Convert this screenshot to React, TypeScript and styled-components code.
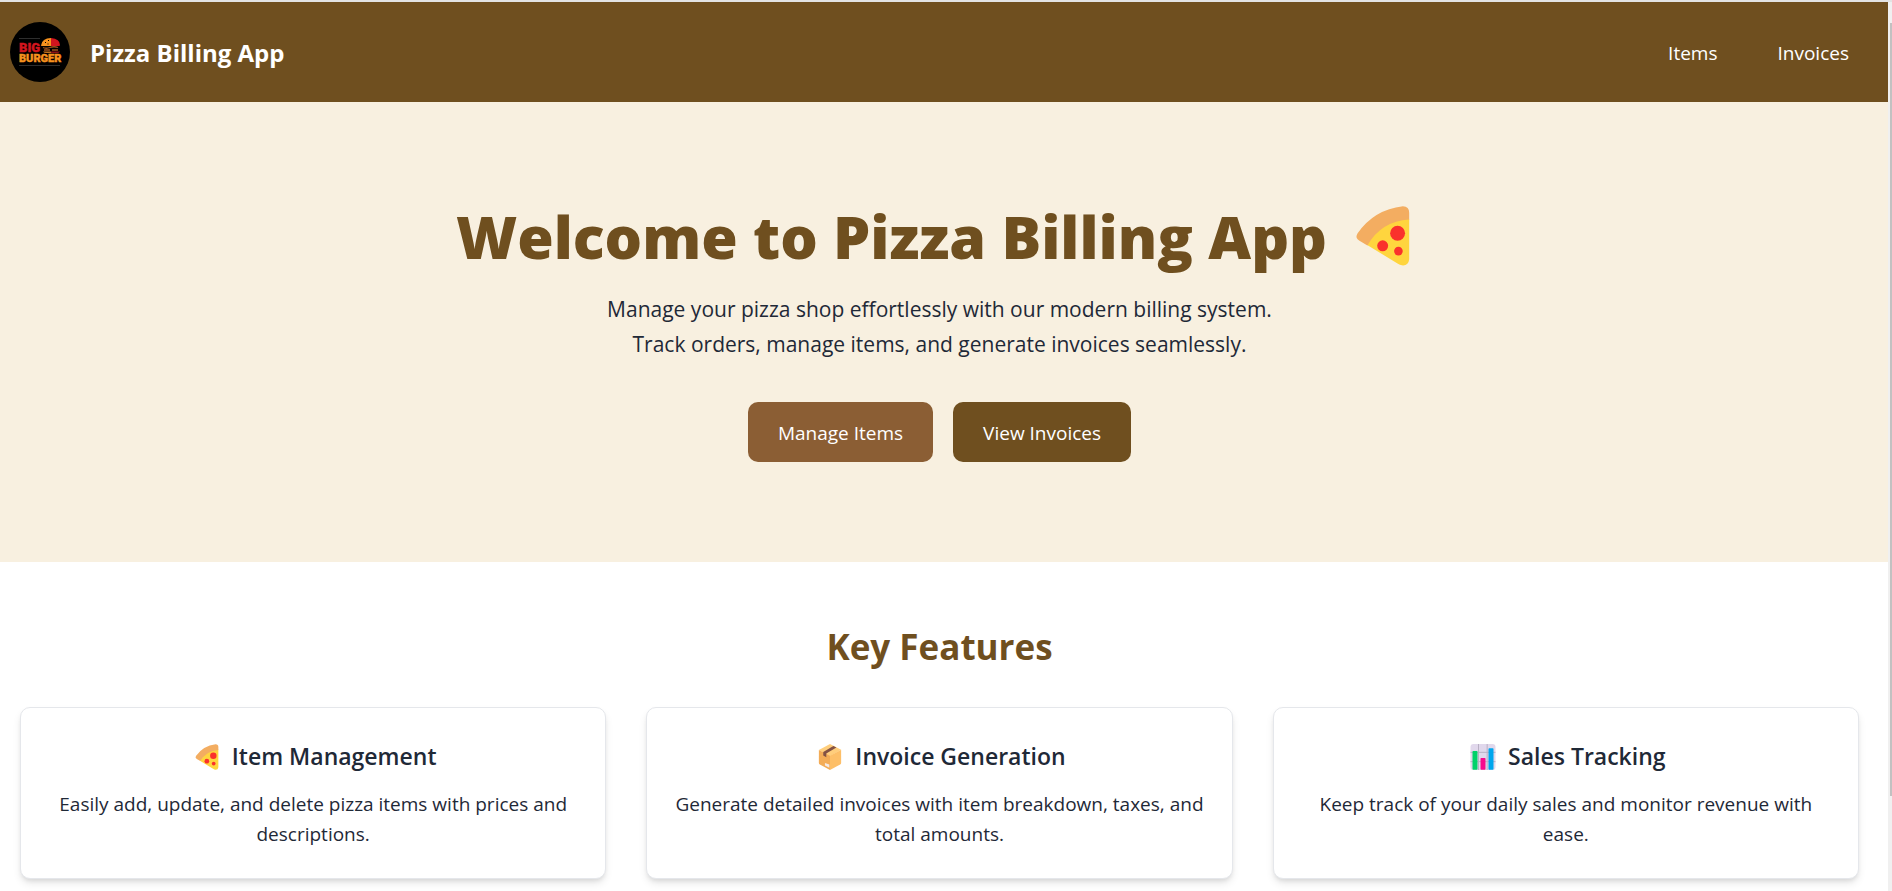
import React from "react";
import styled, { createGlobalStyle } from "styled-components";

const brown = "#6f4f1f";
const ink = "#1f2937";

const GlobalStyle = createGlobalStyle`
  *, *::before, *::after { box-sizing: border-box; }
  body {
    margin: 0;
    background: #fff;
    color: ${ink};
    font-family: "Segoe UI", "Open Sans", "Noto Sans", sans-serif;
    font-size: 19px;
    line-height: 30px;
  }
  h1, h2, h3, p { margin: 0; }
  a { color: inherit; text-decoration: none; }
`;

const Window = styled.div`
  display: flex;
  height: 100vh;
  overflow: hidden;
  border-top: 2px solid #e3e3e3;
`;

const Page = styled.div`
  flex: 1;
  min-width: 0;
`;

const ScrollTrack = styled.div`
  flex: none;
  width: 4px;
  padding: 21px 0 0 2px;
  background: #f0f0f0;
`;

const ScrollThumb = styled.div`
  height: 89%;
  background: #c1c1c1;
`;

const Header = styled.header`
  display: flex;
  align-items: center;
  justify-content: space-between;
  height: 100px;
  padding: 0 39px 0 10px;
  background: ${brown};
  color: #fff;
`;

const Brand = styled.a`
  display: flex;
  align-items: center;
  gap: 20px;
  font-size: 24px;
  font-weight: 700;
`;

const BrandName = styled.span`
  padding-top: 2px;
`;

const Nav = styled.nav`
  display: flex;
  gap: 60px;
  padding-top: 2px;
`;

const Hero = styled.section`
  display: flex;
  flex-direction: column;
  align-items: center;
  padding: 104px 9px 100px 0;
  background: #f8f0e0;
  text-align: center;
`;

const HeroTitle = styled.h1`
  display: flex;
  align-items: center;
  gap: 16px;
  height: 60px;
  margin-bottom: 26px;
  color: ${brown};
  font-size: 59px;
  font-weight: 800;
  line-height: 60px;
`;

const HeroText = styled.p`
  max-width: 700px;
  margin-bottom: 40px;
  font-size: 21px;
  line-height: 35px;
`;

const Actions = styled.div`
  display: flex;
  gap: 20px;
`;

const Button = styled.button<{ $tone: string }>`
  height: 60px;
  padding: 2px 30px 0;
  border: 0;
  border-radius: 10px;
  background: ${(p) => p.$tone};
  color: #fff;
  font: inherit;
  cursor: pointer;
`;

const Features = styled.section`
  padding: 62px 29px 60px 20px;
  text-align: center;
`;

const SectionTitle = styled.h2`
  margin-bottom: 38px;
  color: ${brown};
  font-size: 35px;
  font-weight: 700;
  line-height: 45px;
`;

const CardGrid = styled.div`
  display: grid;
  grid-template-columns: repeat(3, 1fr);
  gap: 40px;
`;

const Card = styled.article`
  padding: 31px 24px 29px;
  border: 1px solid #e5e7eb;
  border-radius: 10px;
  background: #fff;
  box-shadow: 0 5px 8px -1px rgba(0, 0, 0, 0.1), 0 3px 5px -2px rgba(0, 0, 0, 0.1);
`;

const CardTitle = styled.h3`
  display: flex;
  align-items: center;
  justify-content: center;
  gap: 8px;
  margin-bottom: 15px;
  font-size: 23px;
  font-weight: 600;
  line-height: 35px;
`;

const Glyph = styled.svg<{ $w: number; $h: number }>`
  flex: none;
  width: ${(p) => p.$w}px;
  height: ${(p) => p.$h}px;
`;

const Pizza = ({ w, h }: { w: number; h: number }) => (
  <Glyph $w={w} $h={h} viewBox="75 46 160 181" aria-hidden="true">
    <path fill="#ffd53e" d="M234 85V207Q232 227 212 225Q206 224 200 220L106 163Q150 80 234 85Z" />
    <path fill="#f3ad61" d="M215 47Q234 48 234 66V87Q150 92 108 165L84 151Q70 143 78 129Q128 57 215 47Z" />
    <circle cx="199" cy="128" r="22.5" fill="#fa312c" />
    <circle cx="154" cy="166" r="16.5" fill="#fa312c" />
    <circle cx="201.500" cy="182" r="13" fill="#fa312c" />
  </Glyph>
);

const Package = () => (
  <Glyph $w={34} $h={26} viewBox="39 28 66 77" aria-hidden="true">
    <path fill="#ffce7c" d="M72 28L105 45L72 64L39 46Z" />
    <path fill="#f3ac57" d="M39 46L72 63V105L42 89Q39 87 39 84Z" />
    <path fill="#fdbf68" d="M105 45V84Q105 87 102 89L72 105V63Z" />
    <path fill="#835144" d="M52 52L82 34L91 38L61 56V67L52 62Z" />
    <path fill="#f4e9e4" d="M57 84L70 89V98L57 92Z" />
  </Glyph>
);

const BarChart = () => (
  <Glyph $w={34} $h={26} viewBox="30 27 75 78" aria-hidden="true">
    <rect x="30" y="27" width="75" height="78" rx="9" fill="#e1d8ec" />
    <path stroke="#b9b0c4" strokeWidth="3" d="M54 27V105M80 27V105M30 52H105M30 80H105" />
    <rect x="36" y="48" width="15" height="56" rx="2" fill="#00d26a" />
    <rect x="60" y="69" width="15" height="35" rx="2" fill="#f70a8d" />
    <rect x="84" y="40" width="15" height="64" rx="2" fill="#00a6ed" />
  </Glyph>
);

const Logo = () => (
  <Glyph $w={60} $h={60} viewBox="0 0 60 60" role="img" aria-label="Big Burger">
    <circle cx="30" cy="30" r="30" fill="#000" />
    <path stroke="#3a3a3a" strokeWidth="0.8" d="M9 16.500H30M9 43.500H50" />
    <g fontFamily="Roboto, sans-serif" fontWeight="900" strokeWidth="0.4">
      <text x="9" y="29.500" fontSize="13" fill="#d2151e" stroke="#d2151e">BIG</text>
      <text x="9" y="40" fontSize="11" fill="#f7921e" stroke="#f7921e">BURGER</text>
    </g>
    <path fill="#f7921e" d="M31 23.500Q32 16 41 16V24H33Q31 24 31 23.500Z" />
    <path fill="#d2151e" d="M41 16Q50 17 50 23Q50 24 49 24H41Z" />
    <path fill="#000" d="M35 20h1v1h-1zM38 18h1v1h-1zM37.500 21.500h1v1h-1z" />
    <path fill="none" stroke="#a0521b" strokeWidth="1.3" d="M33 25.500Q36 27 40 25.500T48 25.500M34 28H40M42 28H48" />
    <path fill="#c1711c" d="M33 29.500H41V31H36Q34 31 33 29.500Z" />
    <path fill="#8f1118" d="M41 29.500H50Q49 31 47 31H41Z" />
  </Glyph>
);

const features = [
  {
    icon: <Pizza w={34} h={26} />,
    title: "Item Management",
    text: "Easily add, update, and delete pizza items with prices and descriptions.",
  },
  {
    icon: <Package />,
    title: "Invoice Generation",
    text: "Generate detailed invoices with item breakdown, taxes, and total amounts.",
  },
  {
    icon: <BarChart />,
    title: "Sales Tracking",
    text: "Keep track of your daily sales and monitor revenue with ease.",
  },
];

export default function App() {
  return (
    <>
      <GlobalStyle />
      <Window>
        <Page>
          <Header>
            <Brand href="#home">
              <Logo />
              <BrandName>Pizza Billing App</BrandName>
            </Brand>
            <Nav>
              <a href="#items">Items</a>
              <a href="#invoices">Invoices</a>
            </Nav>
          </Header>
          <main>
            <Hero>
              <HeroTitle>
                Welcome to Pizza Billing App
                <Pizza w={80} h={60} />
              </HeroTitle>
              <HeroText>
                Manage your pizza shop effortlessly with our modern billing system. Track orders,
                manage items, and generate invoices seamlessly.
              </HeroText>
              <Actions>
                <Button type="button" $tone="#8b5e34">Manage Items</Button>
                <Button type="button" $tone={brown}>View Invoices</Button>
              </Actions>
            </Hero>
            <Features>
              <SectionTitle>Key Features</SectionTitle>
              <CardGrid>
                {features.map((f) => (
                  <Card key={f.title}>
                    <CardTitle>
                      {f.icon}
                      {f.title}
                    </CardTitle>
                    <p>{f.text}</p>
                  </Card>
                ))}
              </CardGrid>
            </Features>
          </main>
        </Page>
        <ScrollTrack aria-hidden="true">
          <ScrollThumb />
        </ScrollTrack>
      </Window>
    </>
  );
}
